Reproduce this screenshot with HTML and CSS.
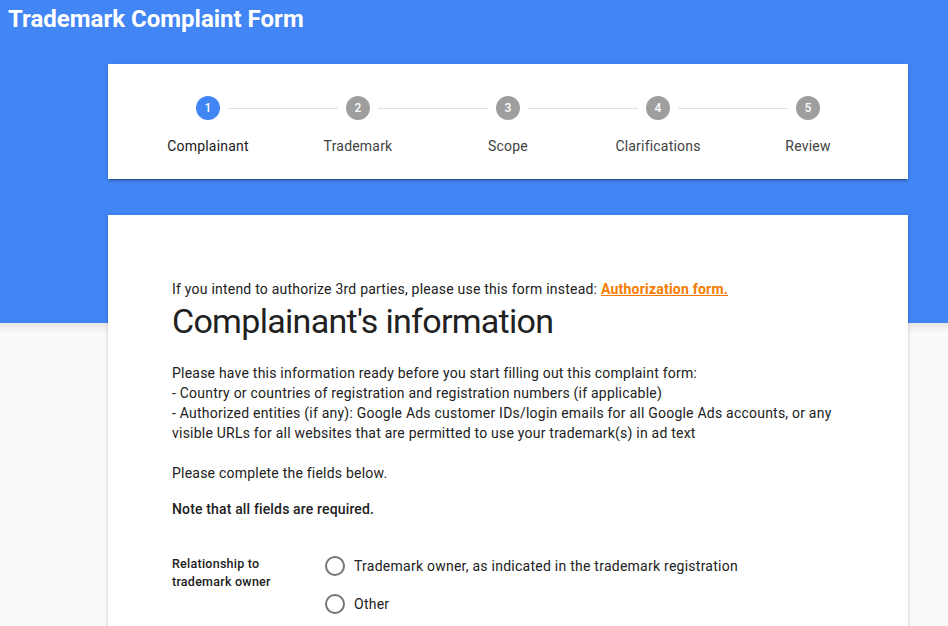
FILE: index.html
```html
<!DOCTYPE html>
<html lang="en">
<head>
<meta charset="utf-8">
<title>Trademark Complaint Form</title>
<link rel="stylesheet" href="styles.css">
</head>
<body>
<header class="top">
  <h1 class="title">Trademark Complaint Form</h1>
</header>
<main class="wrap">
  <section class="card stepper">
    <div class="step active"><span class="dot">1</span><span class="label">Complainant</span></div>
    <div class="step"><span class="dot">2</span><span class="label">Trademark</span></div>
    <div class="step"><span class="dot">3</span><span class="label">Scope</span></div>
    <div class="step"><span class="dot">4</span><span class="label">Clarifications</span></div>
    <div class="step last"><span class="dot">5</span><span class="label">Review</span></div>
  </section>
  <section class="card form">
    <p class="intro">If you intend to authorize 3rd parties, please use this form instead: <a class="link" href="#">Authorization form.</a></p>
    <h2 class="heading">Complainant's information</h2>
    <p class="text">Please have this information ready before you start filling out this complaint form:<br>- Country or countries of registration and registration numbers (if applicable)<br>- Authorized entities (if any): Google Ads customer IDs/login emails for all Google Ads accounts, or any visible URLs for all websites that are permitted to use your trademark(s) in ad text<br><br>Please complete the fields below.</p>
    <p class="note">Note that all fields are required.</p>
    <div class="field">
      <div class="field-label">Relationship to<br>trademark owner</div>
      <div class="options">
        <label class="radio"><span class="circle"></span><span>Trademark owner, as indicated in the trademark registration</span></label>
        <label class="radio"><span class="circle"></span><span>Other</span></label>
      </div>
    </div>
  </section>
</main>
</body>
</html>
```
FILE: styles.css
```css
html, body {
  margin: 0;
  padding: 0;
}
body {
  font-family: Roboto, "Liberation Sans", Arial, sans-serif;
  color: #212121;
  background:
    linear-gradient(#4285f4 0, #4285f4 323px, rgba(0,0,0,0.08) 323px, rgba(0,0,0,0) 333px) no-repeat,
    #fafafa;
  min-height: 626px;
}
.top {
  height: 64px;
  padding: 0 8px;
}
.title {
  margin: 0;
  font-size: 24px;
  font-weight: 700;
  line-height: 38px;
  color: #fff;
}
.wrap {
  width: 800px;
  margin-left: 108px;
}
.card {
  background: #fff;
  box-shadow: 0 2px 2px rgba(0,0,0,0.14), 0 1px 5px rgba(0,0,0,0.12), 0 3px 1px -2px rgba(0,0,0,0.2);
}
.stepper {
  display: flex;
  padding: 32px 25px 23px;
}
.step {
  position: relative;
  width: 150px;
  display: flex;
  flex-direction: column;
  align-items: center;
}
.step::after {
  content: "";
  position: absolute;
  top: 12px;
  left: calc(50% + 20px);
  width: calc(100% - 40px);
  height: 1px;
  background: #e0e0e0;
}
.step.last::after {
  display: none;
}
.dot {
  width: 24px;
  height: 24px;
  border-radius: 50%;
  background: #9e9e9e;
  color: #fff;
  font-size: 12px;
  font-weight: 500;
  line-height: 24px;
  text-align: center;
}
.step.active .dot {
  background: #4285f4;
}
.label {
  margin-top: 16px;
  font-size: 14px;
  line-height: 20px;
  letter-spacing: 0.2px;
  color: #424242;
}
.step.active .label {
  color: #1a1a1a;
}
.form {
  margin-top: 36px;
  padding: 64px 64px 40px;
  min-height: 400px;
  letter-spacing: 0.22px;
}
.intro {
  margin: 0;
  font-size: 14px;
  line-height: 20px;
}
.link {
  color: #f57c00;
  font-weight: 700;
}
.heading {
  margin: 2px 0 22px;
  font-size: 34px;
  font-weight: 400;
  line-height: 40px;
  letter-spacing: -0.7px;
  color: #212121;
}
.text {
  margin: 0 0 16px;
  font-size: 14px;
  line-height: 20px;
}
.note {
  margin: 0 0 36px;
  font-size: 14px;
  line-height: 20px;
  font-weight: 500;
  letter-spacing: 0.15px;
}
.field {
  display: flex;
}
.field-label {
  width: 152px;
  font-size: 12.5px;
  line-height: 18px;
  font-weight: 500;
  letter-spacing: 0.25px;
}
.options {
  display: flex;
  flex-direction: column;
  gap: 17px;
}
.radio {
  display: flex;
  align-items: center;
  gap: 9px;
  font-size: 14px;
  line-height: 20px;
  letter-spacing: 0.25px;
  margin-top: 1px;
}
.circle {
  box-sizing: border-box;
  width: 20px;
  height: 20px;
  border: 2px solid #757575;
  border-radius: 50%;
  margin-left: 1px;
}
```
